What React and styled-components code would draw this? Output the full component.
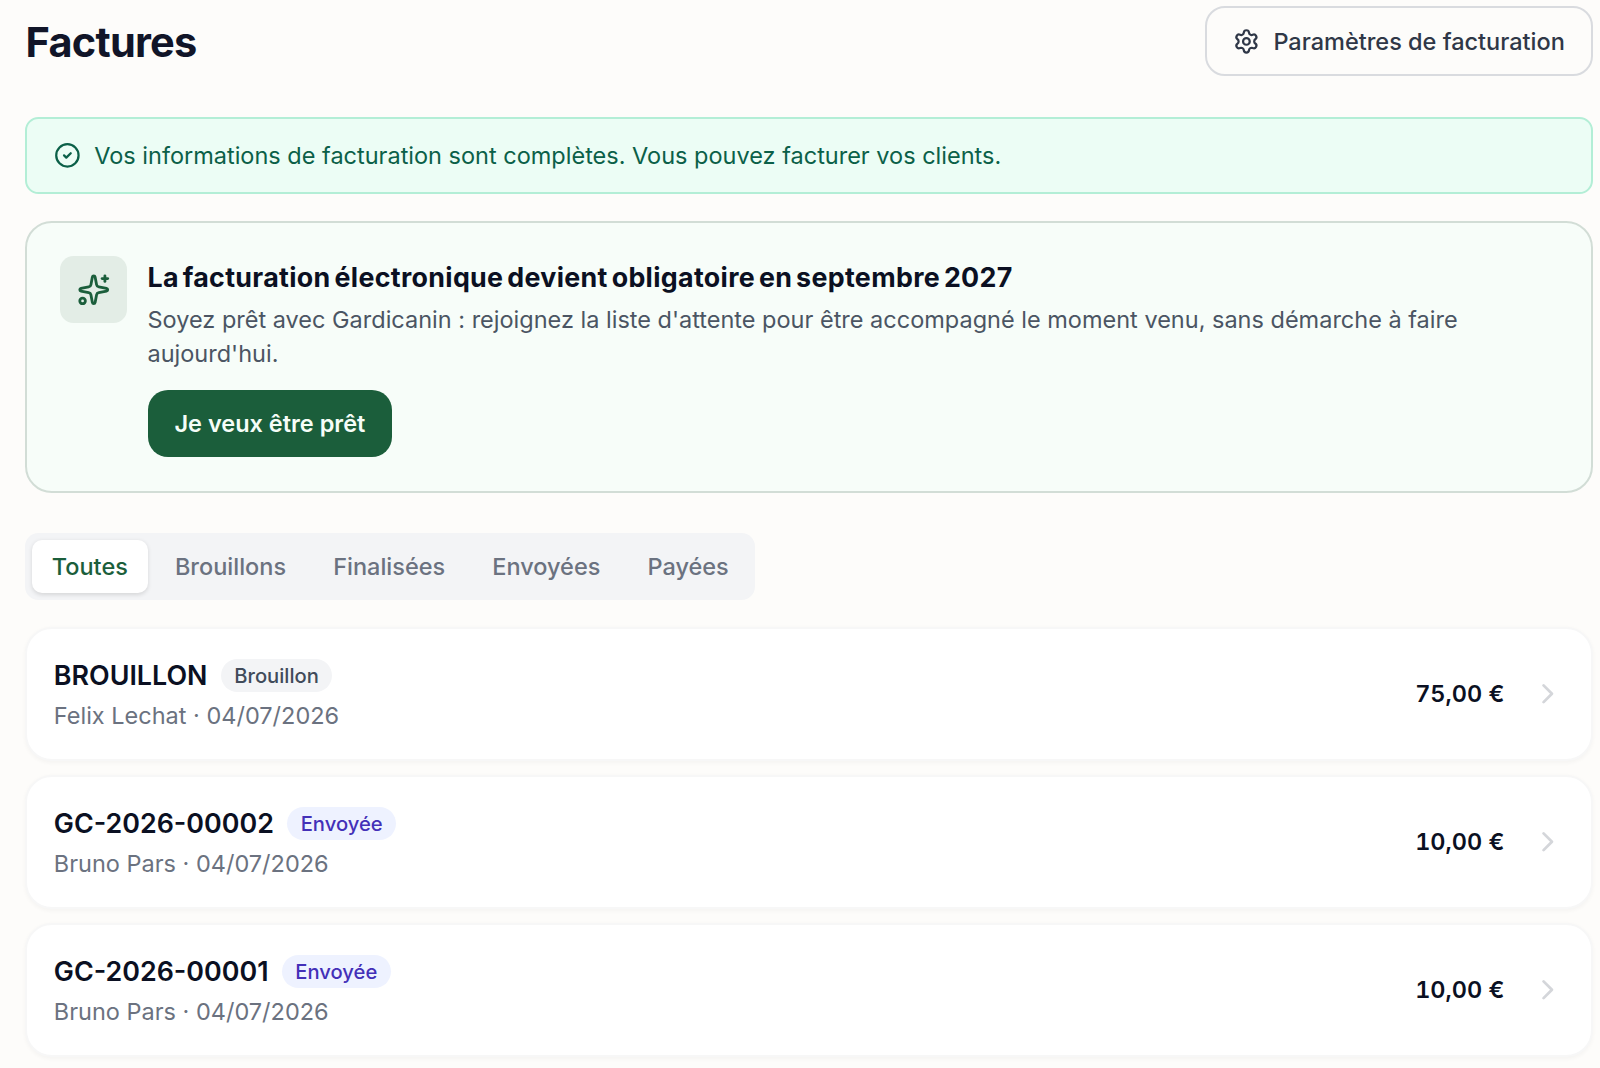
import React from "react";
import styled, { createGlobalStyle } from "styled-components";
import { Settings, CircleCheck, Sparkles, ChevronRight } from "lucide-react";

const GlobalStyle = createGlobalStyle`
  *, *::before, *::after { box-sizing: border-box; }
  body {
    margin: 0;
    background: #fdfcfa;
    color: #0f172a;
    font-family: Inter, "Liberation Sans", sans-serif;
    font-size: 23.51px;
    line-height: 33.5px;
  }
  h1, h2, p { margin: 0; }
  button { font: inherit; cursor: pointer; }
  svg { flex-shrink: 0; display: block; }
`;

const Page = styled.main`
  display: flex;
  flex-direction: column;
  height: 1068px;
  overflow: hidden;
  padding: 6px 7px 0 25px;
`;

const Header = styled.header`
  display: flex;
  align-items: center;
  justify-content: space-between;
  height: 70px;
  margin-bottom: 41px;
`;

const PageTitle = styled.h1`
  padding: 2px 0 0 0.5px;
  font-size: 41.5px;
  line-height: 54px;
  font-weight: 660;
  letter-spacing: -0.75px;
  color: #111528;
`;

const SettingsButton = styled.button`
  display: inline-flex;
  align-items: center;
  gap: 13.4px;
  height: 70px;
  padding: 1px 26.2px 0 26px;
  border: 2px solid #d9dbdf;
  border-radius: 20px;
  background: transparent;
  color: #2f3747;
  font-weight: 500;
`;

const Notice = styled.div`
  display: flex;
  align-items: center;
  gap: 13.4px;
  height: 77px;
  padding: 0 27px;
  margin-bottom: 27px;
  border: 2px solid #b3eed6;
  border-radius: 13.4px;
  background: #ecfdf5;
  color: #0b6048;
`;

const Promo = styled.section`
  display: flex;
  align-items: flex-start;
  gap: 20.5px;
  height: 272px;
  padding: 33px;
  margin-bottom: 40px;
  border: 2px solid #d2ddd6;
  border-radius: 26.8px;
  background: #f7fdf9;
`;

const PromoIcon = styled.div`
  display: grid;
  place-items: center;
  width: 67px;
  height: 67px;
  border-radius: 13.4px;
  background: #e3ede6;
  color: #1b5e3b;
  flex-shrink: 0;
`;

const PromoBody = styled.div`
  flex: 1;
  padding: 0.7px 80px 0 0;
`;

const PromoTitle = styled.h2`
  font-size: 26.8px;
  line-height: 40px;
  font-weight: 660;
  letter-spacing: 0.33px;
  word-spacing: -2.8px;
  color: #0b1022;
  margin-bottom: 6.7px;
`;

const PromoText = styled.p`
  color: #4b5563;
  margin-bottom: 20.1px;
`;

const PrimaryButton = styled.button`
  height: 67px;
  padding: 0 27px;
  border: 0;
  border-radius: 20px;
  background: #1b5e3b;
  color: #f6fdf8;
  font-weight: 600;
`;

const Tabs = styled.nav`
  display: flex;
  align-self: flex-start;
  gap: 6.9px;
  height: 67px;
  padding: 6.7px 6.2px 6.7px 6.7px;
  margin-bottom: 27px;
  border-radius: 13.4px;
  background: #f3f4f6;
`;

const Tab = styled.button`
  padding: 0 20.1px;
  border: 0;
  border-radius: 10px;
  font-weight: 500;
  color: ${(p) => (p.$active ? "#1b5e3b" : "#6b7280")};
  background: ${(p) => (p.$active ? "#ffffff" : "transparent")};
  box-shadow: ${(p) => (p.$active ? "0 1.7px 4px rgba(0, 0, 0, 0.12)" : "none")};
`;

const InvoiceList = styled.div`
  display: flex;
  flex-direction: column;
  gap: 13.4px;
`;

const InvoiceRow = styled.article`
  display: flex;
  align-items: center;
  gap: 26.4px;
  height: 134.4px;
  padding: 0 26.6px 0 26.8px;
  border: 2px solid #f7f7f7;
  border-radius: 26.8px;
  background: #ffffff;
  box-shadow: 0 1.7px 4px rgba(0, 0, 0, 0.035);
`;

const InvoiceInfo = styled.div`
  flex: 1;
`;

const InvoiceHeading = styled.div`
  display: flex;
  align-items: center;
  gap: 13.4px;
  height: 40px;
  margin-bottom: 3.4px;
`;

const InvoiceNumber = styled.span`
  font-size: 26.85px;
  font-weight: 600;
  color: #0b1022;
`;

const Badge = styled.span`
  padding: 0 13.4px;
  border-radius: 17px;
  font-size: 20.2px;
  font-weight: 500;
  line-height: 33px;
  color: ${(p) => (p.$sent ? "#4330b8" : "#414b5a")};
  background: ${(p) => (p.$sent ? "#eef2ff" : "#f3f4f6")};
`;

const InvoiceMeta = styled.p`
  color: #6b7280;
`;

const Amount = styled.span`
  font-weight: 600;
  font-variant-numeric: tabular-nums;
  color: #0b1022;
`;

const tabs = ["Toutes", "Brouillons", "Finalisées", "Envoyées", "Payées"];

const invoices = [
  { number: "BROUILLON", status: "Brouillon", client: "Felix Lechat", date: "04/07/2026", amount: "75,00 €" },
  { number: "GC-2026-00002", status: "Envoyée", client: "Bruno Pars", date: "04/07/2026", amount: "10,00 €" },
  { number: "GC-2026-00001", status: "Envoyée", client: "Bruno Pars", date: "04/07/2026", amount: "10,00 €" },
];

export default function App() {
  return (
    <>
      <GlobalStyle />
      <Page>
        <Header>
          <PageTitle>Factures</PageTitle>
          <SettingsButton>
            <Settings size={26.8} />
            Paramètres de facturation
          </SettingsButton>
        </Header>

        <Notice>
          <CircleCheck size={26.8} />
          <span>Vos informations de facturation sont complètes. Vous pouvez facturer vos clients.</span>
        </Notice>

        <Promo>
          <PromoIcon>
            <Sparkles size={33.5} />
          </PromoIcon>
          <PromoBody>
            <PromoTitle>La facturation électronique devient obligatoire en septembre 2027</PromoTitle>
            <PromoText>
              Soyez prêt avec Gardicanin : rejoignez la liste d'attente pour être accompagné le moment venu, sans
              démarche à faire aujourd'hui.
            </PromoText>
            <PrimaryButton>Je veux être prêt</PrimaryButton>
          </PromoBody>
        </Promo>

        <Tabs>
          {tabs.map((label, i) => (
            <Tab key={label} $active={i === 0}>
              {label}
            </Tab>
          ))}
        </Tabs>

        <InvoiceList>
          {invoices.map((inv) => (
            <InvoiceRow key={inv.number}>
              <InvoiceInfo>
                <InvoiceHeading>
                  <InvoiceNumber>{inv.number}</InvoiceNumber>
                  <Badge $sent={inv.status === "Envoyée"}>{inv.status}</Badge>
                </InvoiceHeading>
                <InvoiceMeta>
                  {inv.client} · {inv.date}
                </InvoiceMeta>
              </InvoiceInfo>
              <Amount>{inv.amount}</Amount>
              <ChevronRight size={33.5} color="#d4d6da" />
            </InvoiceRow>
          ))}
        </InvoiceList>
      </Page>
    </>
  );
}
